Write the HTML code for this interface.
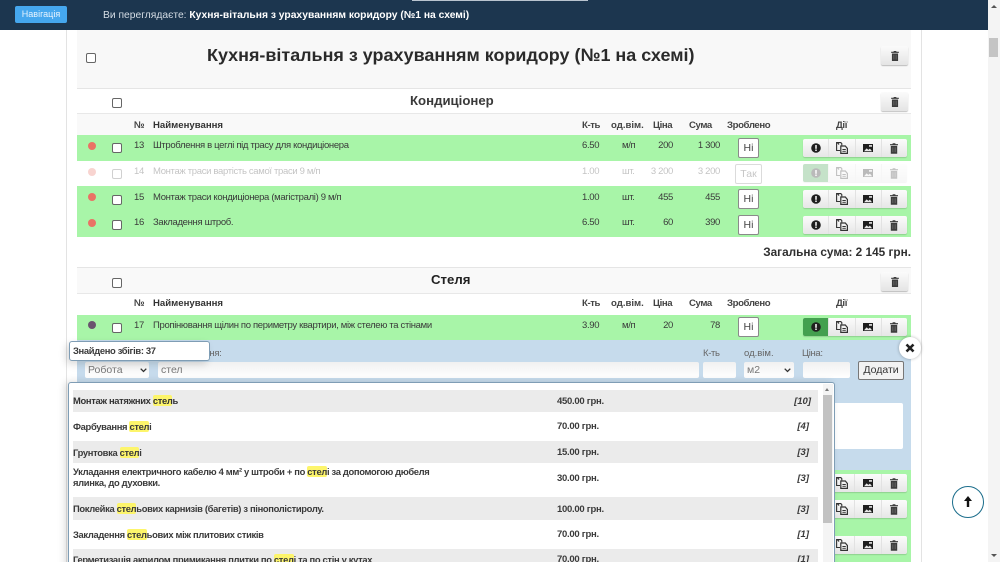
<!DOCTYPE html>
<html lang="uk"><head><meta charset="utf-8"><title>Кухня-вітальня</title>
<style>
*{box-sizing:border-box}
html,body{margin:0;padding:0;width:1000px;height:562px;overflow:hidden;background:#fff}
#w{position:absolute;left:0;top:0;width:1000px;height:562px;overflow:hidden;background:#fff;font-family:"Liberation Sans",sans-serif;color:#3a3a3a;font-size:9.5px;letter-spacing:-.33px;filter:blur(.25px)}
.a{position:absolute}
.t{position:absolute;white-space:nowrap;line-height:12px}
.r{text-align:right}
.b{font-weight:bold;letter-spacing:0;font-size:9.6px}
.h{font-weight:bold;letter-spacing:-.4px;font-size:9.6px;color:#444}
.cb{position:absolute;width:10px;height:10px;background:#fff;border:1px solid #666;border-radius:2px}
.dot{position:absolute;width:8px;height:8px;border-radius:50%;background:#ea7265;left:88px}
.green{position:absolute;left:77px;width:834px;background:#a8f5a8}
.hi{position:absolute;left:738px;width:21px;height:20px;background:#fff;border:1px solid #8a8a8a;border-radius:2px;font-size:10.5px;letter-spacing:0;line-height:18px;text-align:center;color:#444}
.grp{position:absolute;left:803px;width:104px;height:18px;display:flex;border-radius:2px;box-shadow:0 1px 1px rgba(0,0,0,.15);background:linear-gradient(#fbfbfb,#e6e6e6)}
.grp i{flex:1;display:flex;align-items:center;justify-content:center;border-right:1px solid #e2e2e2}
.grp i:last-child{border:0}
.grp i.on{background:#43a04f;border-radius:2px 0 0 2px}
.del{position:absolute;left:881px;width:27px;height:19px;border-radius:2px;background:linear-gradient(#fbfbfb,#e4e4e4);box-shadow:0 1px 1px rgba(0,0,0,.25);display:flex;align-items:center;justify-content:center}
.inp{position:absolute;background:linear-gradient(#f1f1f1,#fff);border-radius:2px;height:16px;top:362px;color:#777;font-size:10.5px;letter-spacing:0;line-height:16px;padding-left:3px}
.row{position:absolute;left:73px;width:745px}
.g{background:#ebebeb}
.mark{background:#fdf56b;border-radius:2px}
.item{position:absolute;left:0;font-weight:bold;font-size:9.4px;letter-spacing:-.33px;line-height:11px;color:#3a3a3a;white-space:nowrap}
.price{position:absolute;left:484px;font-weight:bold;font-size:9.5px;letter-spacing:-.27px;color:#3a3a3a;white-space:nowrap;line-height:11px}
.cnt{position:absolute;right:7px;font-weight:bold;font-style:italic;font-size:9.5px;letter-spacing:0;color:#3a3a3a;line-height:11px}
.fade{opacity:.3}
</style></head><body>
<svg width="0" height="0" style="position:absolute">
<symbol id="tr" viewBox="0 0 10 13"><path fill="#3c3c3c" d="M3.500 0h3l.5 1h3v1.400H0V1h3zM1 3.200h8V13H1z"/><path stroke="#777" stroke-width=".6" d="M3.300 5v6M5 5v6M6.700 5v6"/></symbol>
<symbol id="ex" viewBox="0 0 10 10"><circle cx="5" cy="5" r="4.800" fill="#1f1f1f"/><rect x="4.200" y="2" width="1.600" height="3.800" fill="#eee"/><rect x="4.200" y="6.500" width="1.600" height="1.500" fill="#eee"/></symbol>
<symbol id="cp" viewBox="0 0 12 12"><path fill="none" stroke="#333" stroke-width="1.100" d="M4 8.500H.6V.6h4.200l1 1v1.800"/><path fill="none" stroke="#333" stroke-width="1.200" d="M1.500.6 3 2.500M4.800 4v7.400h6.600V6.500L9.300 4z"/><path fill="none" stroke="#333" stroke-width=".9" d="M6.400 7.500h3.400M6.400 9.300h3.400"/></symbol>
<symbol id="im" viewBox="0 0 10 8"><rect width="10" height="8" fill="#1e1e1e"/><path fill="#e8e8e8" d="M1 7.200l2.600-2.800 1.800 1.500 1.500-1.300 2.200 2.600z"/><rect x="6" y="1" width="3" height="1.800" fill="#cfcfcf"/></symbol>
</svg>
<div id="w">

<div class="a" style="left:66px;top:30px;width:1px;height:532px;background:#e3e3e3"></div>
<div class="a" style="left:921px;top:30px;width:1px;height:532px;background:#e3e3e3"></div>

<div class="a" style="left:0;top:0;width:988px;height:30px;background:#1c364f"></div>
<div class="a" style="left:412px;top:0;width:176px;height:1px;background:#b9c4cf"></div>
<div class="a" style="left:15px;top:6px;width:52px;height:17px;background:#45a7ee;border-radius:2px;color:#e8f4ff;font-size:9px;letter-spacing:0;line-height:17px;text-align:center">Навігація</div>
<div class="t" style="left:103px;top:10px;color:#d5dde5;font-size:10.300px;letter-spacing:0">Ви переглядаєте: <b style="color:#fff">Кухня-вітальня з урахуванням коридору (№1 на схемі)</b></div>

<div class="a" style="left:988px;top:0;width:12px;height:562px;background:#f4f4f4"></div>
<div class="a" style="left:989px;top:38px;width:9px;height:19px;background:#c4c4c4"></div>
<div class="a" style="left:991px;top:5px;border:3px solid transparent;border-bottom:3px solid #555;border-top:0"></div>
<div class="a" style="left:991px;top:554px;border:3px solid transparent;border-top:3px solid #555;border-bottom:0"></div>

<div class="a" style="left:77px;top:30px;width:834px;height:58px;background:#f8f8f8"></div>
<div class="a" style="left:77px;top:88px;width:834px;height:1px;background:#e5e5e5"></div>
<div class="cb" style="left:86px;top:53px"></div>
<div class="t" style="left:207px;top:44px;font-weight:bold;font-size:17.950px;letter-spacing:0;line-height:22px;color:#2a2a2a">Кухня-вітальня з урахуванням коридору (№1 на схемі)</div>
<div class="del" style="top:46px"><svg width="8" height="10"><use href="#tr"/></svg></div>

<div class="a" style="left:77px;top:113px;width:834px;height:1px;background:#e8e8e8"></div>
<div class="a" style="left:77px;top:114px;width:834px;height:21px;background:#f9f9f9"></div>
<div class="cb" style="left:112px;top:98px"></div>
<div class="t" style="left:410px;top:93px;font-weight:bold;font-size:13.200px;letter-spacing:0;line-height:15px">Кондиціонер</div>
<div class="del" style="top:92px"><svg width="8" height="10"><use href="#tr"/></svg></div>

<div class="t h" style="left:134px;top:120px">№</div>
<div class="t b" style="left:153px;top:120px;color:#333">Найменування</div>
<div class="t h" style="left:582px;top:120px">К-ть</div>
<div class="t b" style="left:611px;top:120px;color:#444">од.вім.</div>
<div class="t h" style="left:653px;top:120px">Ціна</div>
<div class="t h" style="left:689px;top:120px">Сума</div>
<div class="t h" style="left:727px;top:120px">Зроблено</div>
<div class="t h" style="left:836px;top:120px">Дії</div>

<div class="green" style="top:135px;height:26px"></div>
<div class="green" style="top:186px;height:51px"></div>

<div class="dot" style="top:142px"></div><div class="cb" style="left:112px;top:143px"></div>
<div class="t" style="left:134px;top:140px">13</div>
<div class="t" style="left:153px;top:140px">Штроблення в цеглі під трасу для кондиціонера</div>
<div class="t" style="left:582px;top:140px">6.50</div><div class="t" style="left:622px;top:140px">м/п</div>
<div class="t r" style="left:640px;width:33px;top:140px">200</div><div class="t r" style="left:680px;width:40px;top:140px">1 300</div>
<div class="hi" style="top:138px">Ні</div>
<div class="grp" style="top:139px"><i><svg width="10" height="10"><use href="#ex"/></svg></i><i><svg width="12" height="12"><use href="#cp"/></svg></i><i><svg width="10" height="8"><use href="#im"/></svg></i><i><svg width="8" height="11"><use href="#tr"/></svg></i></div>

<div class="fade">
<div class="dot" style="top:168px"></div><div class="cb" style="left:112px;top:169px"></div>
<div class="t" style="left:134px;top:166px">14</div>
<div class="t" style="left:153px;top:166px">Монтаж траси вартість самої траси 9 м/п</div>
<div class="t" style="left:582px;top:166px">1.00</div><div class="t" style="left:622px;top:166px">шт.</div>
<div class="t r" style="left:640px;width:33px;top:166px">3 200</div><div class="t r" style="left:680px;width:40px;top:166px">3 200</div>
<div class="hi" style="top:164px;left:735px;width:27px">Так</div>
<div class="grp" style="top:164px"><i class="on"><svg width="10" height="10"><use href="#ex"/></svg></i><i><svg width="12" height="12"><use href="#cp"/></svg></i><i><svg width="10" height="8"><use href="#im"/></svg></i><i><svg width="8" height="11"><use href="#tr"/></svg></i></div>
</div>

<div class="dot" style="top:193px"></div><div class="cb" style="left:112px;top:195px"></div>
<div class="t" style="left:134px;top:192px">15</div>
<div class="t" style="left:153px;top:192px">Монтаж траси кондиціонера (магістралі) 9 м/п</div>
<div class="t" style="left:582px;top:192px">1.00</div><div class="t" style="left:622px;top:192px">шт.</div>
<div class="t r" style="left:640px;width:33px;top:192px">455</div><div class="t r" style="left:680px;width:40px;top:192px">455</div>
<div class="hi" style="top:189px">Ні</div>
<div class="grp" style="top:190px"><i><svg width="10" height="10"><use href="#ex"/></svg></i><i><svg width="12" height="12"><use href="#cp"/></svg></i><i><svg width="10" height="8"><use href="#im"/></svg></i><i><svg width="8" height="11"><use href="#tr"/></svg></i></div>

<div class="dot" style="top:219px"></div><div class="cb" style="left:112px;top:220px"></div>
<div class="t" style="left:134px;top:217px">16</div>
<div class="t" style="left:153px;top:217px">Закладення штроб.</div>
<div class="t" style="left:582px;top:217px">6.50</div><div class="t" style="left:622px;top:217px">шт.</div>
<div class="t r" style="left:640px;width:33px;top:217px">60</div><div class="t r" style="left:680px;width:40px;top:217px">390</div>
<div class="hi" style="top:215px">Ні</div>
<div class="grp" style="top:216px"><i><svg width="10" height="10"><use href="#ex"/></svg></i><i><svg width="12" height="12"><use href="#cp"/></svg></i><i><svg width="10" height="8"><use href="#im"/></svg></i><i><svg width="8" height="11"><use href="#tr"/></svg></i></div>

<div class="t r" style="left:700px;width:211px;top:245px;font-weight:bold;letter-spacing:0;font-size:11.800px;line-height:14px;color:#2f2f2f">Загальна сума: 2 145 грн.</div>

<div class="a" style="left:77px;top:267px;width:834px;height:1px;background:#e5e5e5"></div>
<div class="a" style="left:77px;top:268px;width:834px;height:25px;background:#f9f9f9"></div>
<div class="a" style="left:77px;top:293px;width:834px;height:1px;background:#e8e8e8"></div>
<div class="cb" style="left:112px;top:278px"></div>
<div class="t" style="left:431px;top:272px;font-weight:bold;font-size:13.200px;letter-spacing:0;line-height:15px;color:#222">Стеля</div>
<div class="del" style="top:272px"><svg width="8" height="10"><use href="#tr"/></svg></div>

<div class="t h" style="left:134px;top:298px">№</div>
<div class="t b" style="left:153px;top:298px;color:#333">Найменування</div>
<div class="t h" style="left:582px;top:298px">К-ть</div>
<div class="t b" style="left:611px;top:298px;color:#444">од.вім.</div>
<div class="t h" style="left:653px;top:298px">Ціна</div>
<div class="t h" style="left:689px;top:298px">Сума</div>
<div class="t h" style="left:727px;top:298px">Зроблено</div>
<div class="t h" style="left:836px;top:298px">Дії</div>

<div class="green" style="top:315px;height:25px"></div>
<div class="dot" style="top:321px;background:#6a546e"></div><div class="cb" style="left:112px;top:323px"></div>
<div class="t" style="left:134px;top:320px">17</div>
<div class="t" style="left:153px;top:320px">Пропінювання щілин по периметру квартири, між стелею та стінами</div>
<div class="t" style="left:582px;top:320px">3.90</div><div class="t" style="left:622px;top:320px">м/п</div>
<div class="t r" style="left:640px;width:33px;top:320px">20</div><div class="t r" style="left:680px;width:40px;top:320px">78</div>
<div class="hi" style="top:317px">Ні</div>
<div class="grp" style="top:318px"><i class="on"><svg width="10" height="10"><use href="#ex"/></svg></i><i><svg width="12" height="12"><use href="#cp"/></svg></i><i><svg width="10" height="8"><use href="#im"/></svg></i><i><svg width="8" height="11"><use href="#tr"/></svg></i></div>

<div class="a" style="left:77px;top:340px;width:834px;height:130px;background:#c6dbec"></div>
<div class="green" style="top:470px;height:92px"></div>
<div class="t" style="left:158px;top:348px;color:#666">Найменування:</div>
<div class="t" style="left:703px;top:348px;color:#666">К-ть</div>
<div class="t" style="left:744px;top:348px;color:#666;letter-spacing:0">од.вім.</div>
<div class="t" style="left:802px;top:348px;color:#666">Ціна:</div>
<div class="inp" style="left:85px;width:64px">Робота<svg class="a" style="left:55px;top:6px" width="7" height="5"><path d="M.7.7L3.500 3.500 6.300.7" fill="none" stroke="#333" stroke-width="1.300"/></svg></div>
<div class="inp" style="left:158px;width:541px">стел</div>
<div class="inp" style="left:703px;width:33px"></div>
<div class="inp" style="left:744px;width:50px">м2<svg class="a" style="left:40px;top:6px" width="7" height="5"><path d="M.7.7L3.500 3.500 6.300.7" fill="none" stroke="#333" stroke-width="1.300"/></svg></div>
<div class="inp" style="left:803px;width:47px"></div>
<div class="a" style="left:858px;top:361px;width:46px;height:19px;background:#f2f2f2;border:1px solid #777;border-radius:2px;font-size:10.500px;letter-spacing:0;line-height:17px;text-align:center;color:#333">Додати</div>
<div class="a" style="left:830px;top:403px;width:73px;height:46px;background:#fff;border-radius:2px"></div>

<div class="grp" style="top:474px;left:829px;width:78px"><i><svg width="12" height="12"><use href="#cp"/></svg></i><i><svg width="10" height="8"><use href="#im"/></svg></i><i><svg width="8" height="11"><use href="#tr"/></svg></i></div>
<div class="grp" style="top:500px;left:829px;width:78px"><i><svg width="12" height="12"><use href="#cp"/></svg></i><i><svg width="10" height="8"><use href="#im"/></svg></i><i><svg width="8" height="11"><use href="#tr"/></svg></i></div>
<div class="grp" style="top:536px;left:829px;width:78px"><i><svg width="12" height="12"><use href="#cp"/></svg></i><i><svg width="10" height="8"><use href="#im"/></svg></i><i><svg width="8" height="11"><use href="#tr"/></svg></i></div>

<div class="a" style="left:69px;top:341px;width:141px;height:20px;background:#fff;border:1.500px solid #7f9db5;border-radius:3px;box-shadow:-3px 3px 8px rgba(0,0,0,.15);font-weight:bold;font-size:9.400px;letter-spacing:-.33px;line-height:18px;padding-left:3px;color:#3a3a3a">Знайдено збігів: 37</div>

<div class="a" style="left:68px;top:382px;width:767px;height:190px;background:#fff;border:1.500px solid #7f9db5;border-radius:3px;box-shadow:-3px 0 8px rgba(0,0,0,.15)"></div>
<div class="row g" style="top:390px;height:22px"><div class="item" style="top:5px;color:#333">Монтаж натяжних <span class="mark">стел</span>ь</div><div class="price" style="top:6px">450.00 грн.</div><div class="cnt" style="top:6px">[10]</div></div>
<div class="row" style="top:412px;height:29px"><div class="item" style="top:9px">Фарбування <span class="mark">стел</span>і</div><div class="price" style="top:9px">70.00 грн.</div><div class="cnt" style="top:9px;right:9px">[4]</div></div>
<div class="row g" style="top:441px;height:22px"><div class="item" style="top:6px">Грунтовка <span class="mark">стел</span>і</div><div class="price" style="top:6px">15.00 грн.</div><div class="cnt" style="top:6px;right:9px">[3]</div></div>
<div class="row" style="top:463px;height:34px"><div class="item" style="top:3px">Укладання електричного кабелю 4 мм² у штроби + по <span class="mark">стел</span>і за допомогою дюбеля<br>ялинка, до духовки.</div><div class="price" style="top:10px">30.00 грн.</div><div class="cnt" style="top:10px;right:9px">[3]</div></div>
<div class="row g" style="top:497px;height:23px"><div class="item" style="top:6px">Поклейка <span class="mark">стел</span>ьових карнизів (багетів) з пінополістиролу.</div><div class="price" style="top:7px">100.00 грн.</div><div class="cnt" style="top:7px;right:9px">[3]</div></div>
<div class="row" style="top:520px;height:29px"><div class="item" style="top:9px">Закладення <span class="mark">стел</span>ьових між плитових стиків</div><div class="price" style="top:9px">70.00 грн.</div><div class="cnt" style="top:9px;right:9px">[1]</div></div>
<div class="row g" style="top:549px;height:13px"><div class="item" style="top:5px">Герметизація акрилом примикання плитки по <span class="mark">стел</span>і та по стін у кутах</div><div class="price" style="top:5px">70.00 грн.</div><div class="cnt" style="top:5px;right:9px">[1]</div></div>
<div class="a" style="left:823px;top:384px;width:10px;height:178px;background:#f4f4f4"></div>
<div class="a" style="left:823px;top:395px;width:9px;height:128px;background:#c2c2c2"></div>
<div class="a" style="left:825px;top:388px;border:2.500px solid transparent;border-bottom:3px solid #777;border-top:0"></div>

<div class="a" style="left:899px;top:337px;width:22px;height:22px;border-radius:50%;background:#fff;box-shadow:0 0 3px rgba(0,0,0,.3)"><svg class="a" style="left:6px;top:6px" width="10" height="10"><path d="M1.500 1.500l7 7M8.500 1.500l-7 7" stroke="#222" stroke-width="2.600"/></svg></div>

<div class="a" style="left:952px;top:486px;width:32px;height:32px;border-radius:50%;background:#fff;border:1.500px solid #1c6e8c"><svg class="a" style="left:11px;top:9px" width="8" height="11"><path d="M4 0L8 5H5.200V11H2.800V5H0z" fill="#111"/></svg></div>
</div>
</body></html>
